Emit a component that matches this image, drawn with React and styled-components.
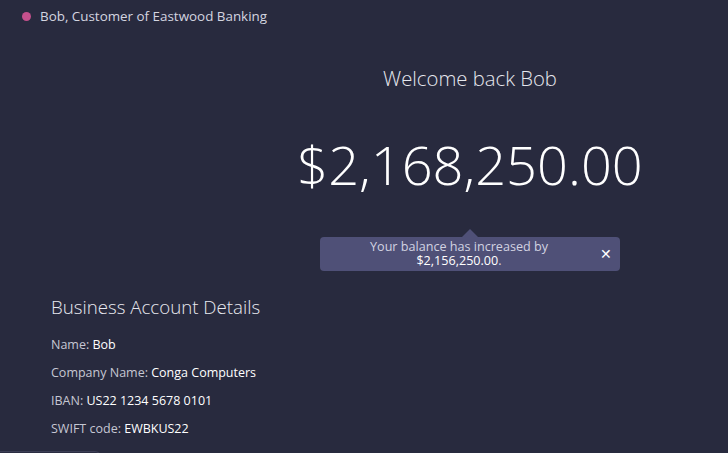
import styled, { createGlobalStyle } from 'styled-components';

const Global = createGlobalStyle`
  html, body {
    margin: 0;
    background: #282a3e;
    font-family: 'Open Sans', 'Liberation Sans', sans-serif;
    color: #fff;
  }
`;

const Page = styled.div`
  width: 728px;
  height: 453px;
  overflow: hidden;
  background: #282a3e;
`;

const TopBar = styled.div`
  display: flex;
  align-items: center;
  gap: 9px;
  height: 32px;
  padding-left: 22px;
  font-size: 13.4px;
  color: #d4d5e0;
`;

const Dot = styled.span`
  width: 9px;
  height: 9px;
  border-radius: 50%;
  background: #c4508c;
`;

const Hero = styled.section`
  display: grid;
  grid-template-columns: 212px 1fr;
`;

const Center = styled.div`
  grid-column: 2;
  display: flex;
  flex-direction: column;
  align-items: center;
`;

const Welcome = styled.h2`
  margin: 32px 0 0;
  font-weight: 300;
  font-size: 20.3px;
  line-height: 28px;
  color: #e6e7ee;
`;

const Balance = styled.div`
  margin-top: 42px;
  font-weight: 300;
  font-size: 54.2px;
  line-height: 60px;
`;

const Toast = styled.div`
  position: relative;
  margin-top: 43px;
  width: 300px;
  box-sizing: border-box;
  padding: 3px 30px 3px 8px;
  background: #4f5077;
  border-radius: 4px;
  text-align: center;
  font-size: 12.6px;
  line-height: 14px;
  color: #d2d3e2;

  &::before {
    content: '';
    position: absolute;
    left: 50%;
    top: -8px;
    margin-left: -8px;
    border: 8px solid transparent;
    border-top: 0;
    border-bottom-color: #4f5077;
  }

  b {
    font-weight: 400;
    color: #fff;
  }
`;

const Close = styled.span`
  position: absolute;
  right: 8px;
  top: 50%;
  transform: translateY(-50%);
  font-size: 14px;
  color: #fff;
`;

const Details = styled.section`
  padding: 23px 0 0 51px;
`;

const Heading = styled.h3`
  margin: 0 0 11px;
  font-weight: 300;
  font-size: 18.7px;
  line-height: 26px;
  color: #e8e9f0;
`;

const Row = styled.div`
  font-size: 12.5px;
  line-height: 28px;
  color: #c6c7d3;

  strong {
    font-weight: 500;
    color: #fff;
  }
`;

const Footer = styled.div`
  margin-top: 8px;
  width: 100px;
  height: 20px;
  border: 1px solid #3c3e55;
  border-left: 0;
  border-radius: 0 6px 0 0;
  background: #2b2d42;
`;

const rows = [
  ['Name', 'Bob'],
  ['Company Name', 'Conga Computers'],
  ['IBAN', 'US22 1234 5678 0101'],
  ['SWIFT code', 'EWBKUS22'],
];

const App = () => (
  <Page>
    <Global />
    <TopBar>
      <Dot />
      Bob, Customer of Eastwood Banking
    </TopBar>
    <Hero>
      <Center>
        <Welcome>Welcome back Bob</Welcome>
        <Balance>$2,168,250.00</Balance>
        <Toast>
          Your balance has increased by
          <br />
          <b>$2,156,250.00</b>.
          <Close>✕</Close>
        </Toast>
      </Center>
    </Hero>
    <Details>
      <Heading>Business Account Details</Heading>
      {rows.map(([label, value]) => (
        <Row key={label}>
          {label}: <strong>{value}</strong>
        </Row>
      ))}
    </Details>
    <Footer />
  </Page>
);

export default App;
